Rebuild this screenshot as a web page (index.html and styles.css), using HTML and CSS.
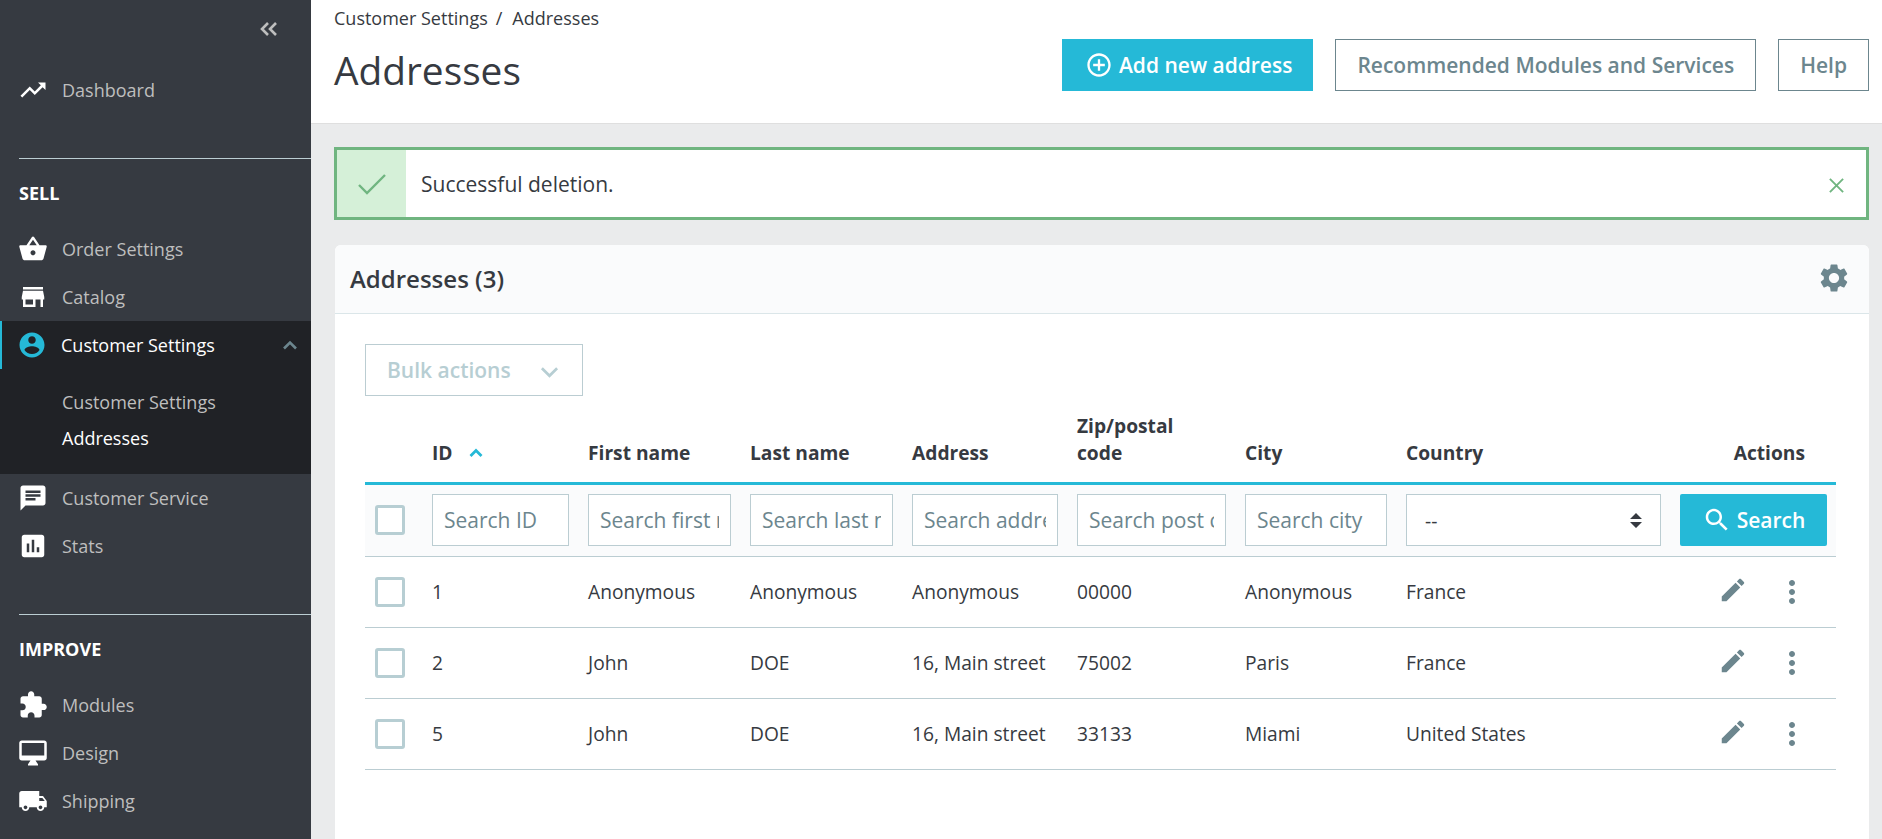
FILE: index.html
```html
<!DOCTYPE html>
<html lang="en">
<head>
    <meta charset="UTF-8">
    <meta name="viewport" content="width=device-width, initial-scale=1.0">
    <title>Addresses</title>
    <link rel="stylesheet" href="styles.css">
</head>
<body>
    <nav class="sidebar">
        <div class="nav-toggle">
            <svg class="toggle-icon" viewBox="0 0 20 14"><path d="M9 1 3 7l6 6M17 1l-6 6 6 6"/></svg>
        </div>
        <a class="nav-item">
            <svg class="nav-icon" viewBox="0 0 24 24"><path d="m16 6 2.29 2.29-4.88 4.88-4-4L2 16.59 3.41 18l6-6 4 4 6.3-6.29L22 12V6z"/></svg>
            Dashboard
        </a>

        <div class="nav-title">SELL</div>
        <a class="nav-item">
            <svg class="nav-icon" viewBox="0 0 24 24"><path d="M17.21 9l-4.38-6.56c-.19-.28-.51-.42-.83-.42-.32 0-.64.14-.83.43L6.79 9H2c-.55 0-1 .45-1 1 0 .09.01.18.04.27l2.54 9.27c.23.84 1 1.46 1.92 1.46h13c.92 0 1.69-.62 1.93-1.46l2.54-9.27L23 10c0-.55-.45-1-1-1h-4.79zM9 9l3-4.4L15 9H9zm3 8c-1.1 0-2-.9-2-2s.9-2 2-2 2 .9 2 2-.9 2-2 2z"/></svg>
            Order Settings
        </a>
        <a class="nav-item">
            <svg class="nav-icon" viewBox="0 0 24 24"><path d="M20 4H4v2h16V4zm1 10v-2l-1-5H4l-1 5v2h1v6h10v-6h4v6h2v-6h1zm-9 4H6v-4h6v4z"/></svg>
            Catalog
        </a>
        <div class="nav-group">
            <a class="nav-item nav-item-active">
                <svg class="nav-icon icon-blue" viewBox="0 0 24 24"><path d="M12 2C6.48 2 2 6.48 2 12s4.48 10 10 10 10-4.48 10-10S17.52 2 12 2zm0 3c1.66 0 3 1.34 3 3s-1.34 3-3 3-3-1.34-3-3 1.34-3 3-3zm0 14.2c-2.5 0-4.71-1.28-6-3.22.03-1.99 4-3.08 6-3.08 1.99 0 5.97 1.09 6 3.08-1.29 1.94-3.5 3.22-6 3.22z"/></svg>
                Customer Settings
                <svg class="nav-arrow" viewBox="0 0 16 10"><path d="M2 8.5 8 2.5l6 6"/></svg>
            </a>
            <div class="subnav">
                <a class="subnav-item">Customer Settings</a>
                <a class="subnav-item subnav-active">Addresses</a>
            </div>
        </div>
        <a class="nav-item">
            <svg class="nav-icon" viewBox="0 0 24 24"><path d="M20 2H4c-1.1 0-1.99.9-1.99 2L2 22l4-4h14c1.1 0 2-.9 2-2V4c0-1.1-.9-2-2-2zM6 9h12v2H6V9zm8 5H6v-2h8v2zm4-6H6V6h12v2z"/></svg>
            Customer Service
        </a>
        <a class="nav-item">
            <svg class="nav-icon" viewBox="0 0 24 24"><path d="M19 3H5c-1.1 0-2 .9-2 2v14c0 1.1.9 2 2 2h14c1.1 0 2-.9 2-2V5c0-1.1-.9-2-2-2zM9 17H7v-7h2v7zm4 0h-2V7h2v10zm4 0h-2v-4h2v4z"/></svg>
            Stats
        </a>

        <div class="nav-title">IMPROVE</div>
        <a class="nav-item">
            <svg class="nav-icon" viewBox="0 0 24 24"><path d="M20.5 11H19V7c0-1.1-.9-2-2-2h-4V3.5C13 2.12 11.88 1 10.5 1S8 2.12 8 3.5V5H4c-1.1 0-1.99.9-1.99 2v3.8H3.5c1.49 0 2.7 1.21 2.7 2.7s-1.21 2.7-2.7 2.7H2V20c0 1.1.9 2 2 2h3.8v-1.5c0-1.49 1.21-2.7 2.7-2.7 1.49 0 2.7 1.21 2.7 2.7V22H17c1.1 0 2-.9 2-2v-4h1.5c1.38 0 2.5-1.12 2.5-2.5S21.88 11 20.5 11z"/></svg>
            Modules
        </a>
        <a class="nav-item">
            <svg class="nav-icon" viewBox="0 0 24 24"><path d="M21 2H3c-1.1 0-2 .9-2 2v12c0 1.1.9 2 2 2h7l-2 3v1h8v-1l-2-3h7c1.1 0 2-.9 2-2V4c0-1.1-.9-2-2-2zm0 12H3V4h18v10z"/></svg>
            Design
        </a>
        <a class="nav-item">
            <svg class="nav-icon" viewBox="0 0 24 24"><path d="M20 8h-3V4H3c-1.1 0-2 .9-2 2v11h2c0 1.66 1.34 3 3 3s3-1.34 3-3h6c0 1.66 1.34 3 3 3s3-1.34 3-3h2v-5l-3-4zM6 18.5c-.83 0-1.5-.67-1.5-1.5s.67-1.5 1.5-1.5 1.5.67 1.5 1.5-.67 1.5-1.5 1.5zm13.5-9 1.96 2.5H17V9.5h2.5zm-1.5 9c-.83 0-1.5-.67-1.5-1.5s.67-1.5 1.5-1.5 1.5.67 1.5 1.5-.67 1.5-1.5 1.5z"/></svg>
            Shipping
        </a>
        <a class="nav-item">
            <svg class="nav-icon" viewBox="0 0 24 24"><path d="M20 4H4c-1.11 0-1.99.89-1.99 2L2 18c0 1.11.89 2 2 2h16c1.11 0 2-.89 2-2V6c0-1.11-.89-2-2-2zm0 14H4v-6h16v6zm0-10H4V6h16v2z"/></svg>
        </a>
    </nav>

    <div class="main">
        <header class="topbar">
            <div class="breadcrumb"><span>Customer Settings</span><span class="breadcrumb-sep">/</span><span>Addresses</span></div>
            <div class="topbar-row">
                <h1>Addresses</h1>
                <div class="toolbar">
                    <button class="btn btn-primary">
                        <svg class="btn-icon" viewBox="0 0 24 24"><path d="M13 7h-2v4H7v2h4v4h2v-4h4v-2h-4V7zm-1-5C6.48 2 2 6.48 2 12s4.48 10 10 10 10-4.48 10-10S17.52 2 12 2zm0 18c-4.41 0-8-3.59-8-8s3.59-8 8-8 8 3.59 8 8-3.59 8-8 8z"/></svg>
                        Add new address
                    </button>
                    <button class="btn btn-outline">Recommended Modules and Services</button>
                    <button class="btn btn-outline">Help</button>
                </div>
            </div>
        </header>

        <div class="content">
            <div class="alert">
                <div class="alert-icon">
                    <svg viewBox="0 0 30 24"><path d="M2 13l8 8L28 3"/></svg>
                </div>
                <div class="alert-text">Successful deletion.</div>
                <svg class="alert-close" viewBox="0 0 18 18"><path d="M2 2l14 14M16 2 2 16"/></svg>
            </div>

            <section class="card">
                <div class="card-header">
                    <h2>Addresses (3)</h2>
                    <svg class="card-gear" viewBox="0 0 24 24"><path d="M19.14 12.94c.04-.3.06-.61.06-.94 0-.32-.02-.64-.07-.94l2.03-1.58c.18-.14.23-.41.12-.61l-1.92-3.32c-.12-.22-.37-.29-.59-.22l-2.39.96c-.5-.38-1.03-.7-1.62-.94l-.36-2.54c-.04-.24-.24-.41-.48-.41h-3.84c-.24 0-.43.17-.47.41l-.36 2.54c-.59.24-1.13.57-1.62.94l-2.39-.96c-.22-.08-.47 0-.59.22L2.74 8.87c-.12.21-.08.47.12.61l2.03 1.58c-.05.3-.09.63-.09.94s.02.64.07.94l-2.03 1.58c-.18.14-.23.41-.12.61l1.92 3.32c.12.22.37.29.59.22l2.39-.96c.5.38 1.03.7 1.62.94l.36 2.54c.05.24.24.41.48.41h3.84c.24 0 .44-.17.47-.41l.36-2.54c.59-.24 1.13-.56 1.62-.94l2.39.96c.22.08.47 0 .59-.22l1.92-3.32c.12-.22.07-.47-.12-.61l-2.01-1.58zM12 15.6c-1.98 0-3.6-1.62-3.6-3.6s1.62-3.6 3.6-3.6 3.6 1.62 3.6 3.6-1.62 3.6-3.6 3.6z"/></svg>
                </div>
                <div class="card-body">
                    <button class="bulk-btn">
                        Bulk actions
                        <svg viewBox="0 0 20 12"><path d="M2 2l8 8 8-8"/></svg>
                    </button>

                    <table class="grid">
                        <colgroup>
                            <col class="col-check"><col class="col-id"><col class="col-first"><col class="col-last">
                            <col class="col-address"><col class="col-zip"><col class="col-city"><col class="col-country"><col class="col-actions">
                        </colgroup>
                        <thead>
                            <tr class="head-row">
                                <th></th>
                                <th>ID <svg class="sort-icon" viewBox="0 0 14 10"><path d="M1.5 8 7 2.5 12.5 8"/></svg></th>
                                <th>First name</th>
                                <th>Last name</th>
                                <th>Address</th>
                                <th class="th-zip">Zip/postal code</th>
                                <th>City</th>
                                <th>Country</th>
                                <th class="th-actions">Actions</th>
                            </tr>
                            <tr class="filter-row">
                                <td><input type="checkbox" class="check"></td>
                                <td><input class="filter-input" placeholder="Search ID"></td>
                                <td><input class="filter-input" placeholder="Search first name"></td>
                                <td><input class="filter-input" placeholder="Search last name"></td>
                                <td><input class="filter-input" placeholder="Search address"></td>
                                <td><input class="filter-input" placeholder="Search post code"></td>
                                <td><input class="filter-input" placeholder="Search city"></td>
                                <td>
                                    <div class="select-wrap">
                                        <select class="filter-select"><option>--</option></select>
                                        <svg class="select-arrows" viewBox="0 0 12 15"><path d="M6 0l6 6H0zM6 15 0 9h12z"/></svg>
                                    </div>
                                </td>
                                <td>
                                    <button class="search-btn">
                                        <svg viewBox="0 0 24 24"><path d="M15.5 14h-.79l-.28-.27C15.41 12.59 16 11.11 16 9.5 16 5.91 13.09 3 9.5 3S3 5.91 3 9.5 5.91 16 9.5 16c1.61 0 3.09-.59 4.23-1.57l.27.28v.79l5 4.99L20.49 19l-4.99-5zm-6 0C7.01 14 5 11.99 5 9.5S7.01 5 9.5 5 14 7.01 14 9.5 11.99 14 9.5 14z"/></svg>
                                        Search
                                    </button>
                                </td>
                            </tr>
                        </thead>
                        <tbody>
                            <tr>
                                <td><input type="checkbox" class="check"></td>
                                <td>1</td><td>Anonymous</td><td>Anonymous</td><td>Anonymous</td><td>00000</td><td>Anonymous</td><td>France</td>
                                <td>
                                    <div class="row-actions">
                                        <svg class="act-edit" viewBox="0 0 24 24"><path d="M3 17.25V21h3.75L17.81 9.94l-3.75-3.75L3 17.25zM20.71 7.04c.39-.39.39-1.02 0-1.41l-2.34-2.34c-.39-.39-1.02-.39-1.41 0l-1.83 1.83 3.75 3.75 1.83-1.83z"/></svg>
                                        <svg class="act-more" viewBox="0 0 24 24"><path d="M12 8c1.1 0 2-.9 2-2s-.9-2-2-2-2 .9-2 2 .9 2 2 2zm0 2c-1.1 0-2 .9-2 2s.9 2 2 2 2-.9 2-2-.9-2-2-2zm0 6c-1.1 0-2 .9-2 2s.9 2 2 2 2-.9 2-2-.9-2-2-2z"/></svg>
                                    </div>
                                </td>
                            </tr>
                            <tr>
                                <td><input type="checkbox" class="check"></td>
                                <td>2</td><td>John</td><td>DOE</td><td>16, Main street</td><td>75002</td><td>Paris</td><td>France</td>
                                <td>
                                    <div class="row-actions">
                                        <svg class="act-edit" viewBox="0 0 24 24"><path d="M3 17.25V21h3.75L17.81 9.94l-3.75-3.75L3 17.25zM20.71 7.04c.39-.39.39-1.02 0-1.41l-2.34-2.34c-.39-.39-1.02-.39-1.41 0l-1.83 1.83 3.75 3.75 1.83-1.83z"/></svg>
                                        <svg class="act-more" viewBox="0 0 24 24"><path d="M12 8c1.1 0 2-.9 2-2s-.9-2-2-2-2 .9-2 2 .9 2 2 2zm0 2c-1.1 0-2 .9-2 2s.9 2 2 2 2-.9 2-2-.9-2-2-2zm0 6c-1.1 0-2 .9-2 2s.9 2 2 2 2-.9 2-2-.9-2-2-2z"/></svg>
                                    </div>
                                </td>
                            </tr>
                            <tr>
                                <td><input type="checkbox" class="check"></td>
                                <td>5</td><td>John</td><td>DOE</td><td>16, Main street</td><td>33133</td><td>Miami</td><td>United States</td>
                                <td>
                                    <div class="row-actions">
                                        <svg class="act-edit" viewBox="0 0 24 24"><path d="M3 17.25V21h3.75L17.81 9.94l-3.75-3.75L3 17.25zM20.71 7.04c.39-.39.39-1.02 0-1.41l-2.34-2.34c-.39-.39-1.02-.39-1.41 0l-1.83 1.83 3.75 3.75 1.83-1.83z"/></svg>
                                        <svg class="act-more" viewBox="0 0 24 24"><path d="M12 8c1.1 0 2-.9 2-2s-.9-2-2-2-2 .9-2 2 .9 2 2 2zm0 2c-1.1 0-2 .9-2 2s.9 2 2 2 2-.9 2-2-.9-2-2-2zm0 6c-1.1 0-2 .9-2 2s.9 2 2 2 2-.9 2-2-.9-2-2-2z"/></svg>
                                    </div>
                                </td>
                            </tr>
                        </tbody>
                    </table>
                </div>
            </section>
        </div>
    </div>
</body>
</html>
```

FILE: styles.css
```css
* {
    box-sizing: border-box;
}
body {
    margin: 0;
    height: 100vh;
    overflow: hidden;
    display: flex;
    font-family: "Open Sans", sans-serif;
    font-size: 18px;
    color: #363a41;
    background-color: #eaebec;
}

/* sidebar */
.sidebar {
    width: 311px;
    flex-shrink: 0;
    height: 100vh;
    overflow: hidden;
    background-color: #363a41;
}
.nav-toggle {
    height: 66px;
    padding: 22px 32px 0 0;
    display: flex;
    justify-content: flex-end;
}
.toggle-icon {
    width: 20px;
    height: 14px;
    fill: none;
    stroke: #bebebe;
    stroke-width: 2.6;
}
.nav-item {
    height: 48px;
    display: flex;
    align-items: center;
    gap: 14px;
    padding-left: 18px;
    color: #bebebe;
}
.nav-icon {
    width: 30px;
    height: 30px;
    flex-shrink: 0;
    fill: #fff;
}
.icon-blue {
    fill: #25b9d7;
}
.nav-title {
    margin: 44px 0 0 19px;
    padding: 22px 0 20px;
    border-top: 1px solid #bbcdd2;
    line-height: 24px;
    font-size: 18px;
    font-weight: 700;
    color: #fff;
}
.nav-group {
    background-color: #202226;
}
.nav-item-active {
    gap: 14px;
    padding-left: 15px;
    color: #fff;
    border-left: 2px solid #25b9d7;
}
.nav-arrow {
    width: 16px;
    height: 10px;
    margin-left: auto;
    margin-right: 13px;
    fill: none;
    stroke: #6c868e;
    stroke-width: 2.6;
}
.subnav {
    padding: 15px 0 18px 62px;
}
.subnav-item {
    display: block;
    height: 36px;
    line-height: 36px;
    color: #bebebe;
}
.subnav-active {
    color: #fff;
}

/* top bar */
.main {
    flex: 1;
    min-width: 0;
    display: flex;
    flex-direction: column;
}
.topbar {
    height: 124px;
    flex-shrink: 0;
    padding: 7px 13px 0 23px;
    background-color: #fff;
    border-bottom: 1px solid #dfdfdf;
}
.breadcrumb {
    line-height: 23px;
    display: flex;
    gap: 8px;
}
.breadcrumb-sep {
    margin-right: 2px;
}
.topbar-row {
    display: flex;
    justify-content: space-between;
    align-items: flex-start;
}
h1 {
    margin: 8px 0 0;
    font-size: 38.8px;
    line-height: 64px;
    font-weight: 400;
}
.toolbar {
    display: flex;
    gap: 22px;
    margin-top: 9px;
}
.btn {
    height: 52px;
    padding: 0 21px;
    display: flex;
    align-items: center;
    font-family: "Open Sans", sans-serif;
    font-size: 21px;
    font-weight: 600;
    border: 1px solid #6c868e;
    background-color: #fff;
    color: #6c868e;
    border-radius: 0;
}
.btn-primary {
    gap: 6px;
    padding: 0 20px 0 22px;
    background-color: #25b9d7;
    border-color: #25b9d7;
    color: #fff;
}
.btn-icon {
    width: 28px;
    height: 28px;
    fill: #fff;
}

/* alert */
.content {
    flex: 1;
    display: flex;
    flex-direction: column;
    min-height: 0;
    padding: 23px 13px 0 23px;
}
.alert {
    height: 73px;
    flex-shrink: 0;
    display: flex;
    align-items: center;
    border: 3px solid #70b580;
    background-color: #fff;
}
.alert-icon {
    width: 69px;
    height: 100%;
    display: flex;
    align-items: center;
    justify-content: center;
    background-color: #d5f0d8;
}
.alert-icon svg {
    width: 30px;
    height: 24px;
    fill: none;
    stroke: #70b580;
    stroke-width: 2.4;
}
.alert-text {
    flex: 1;
    padding-left: 15px;
    font-size: 21px;
}
.alert-close {
    width: 17px;
    height: 17px;
    margin-right: 21px;
    margin-top: 3px;
    fill: none;
    stroke: #70b580;
    stroke-width: 2;
}

/* card */
.card {
    flex: 1;
    margin-top: 25px;
    margin-left: 1px;
    background-color: #fff;
    border-radius: 6px 6px 0 0;
}
.card-header {
    height: 69px;
    display: flex;
    align-items: center;
    justify-content: space-between;
    padding: 0 18px 2px 15px;
    background-color: #fafbfc;
    border-bottom: 1px solid #dbe6e9;
    border-radius: 6px 6px 0 0;
}
h2 {
    margin: 0;
    font-size: 24px;
    font-weight: 600;
}
.card-gear {
    width: 34px;
    height: 34px;
    fill: #6c868e;
}
.card-body {
    padding: 30px 32px 0 30px;
}
.bulk-btn {
    width: 218px;
    height: 52px;
    padding: 0 23px 0 21px;
    display: flex;
    align-items: center;
    justify-content: space-between;
    font-family: "Open Sans", sans-serif;
    font-size: 21px;
    font-weight: 600;
    color: #b7ced3;
    background-color: #fff;
    border: 1px solid #bbcdd2;
}
.bulk-btn svg {
    width: 19px;
    height: 12px;
    margin-top: 3px;
    fill: none;
    stroke: #b7ced3;
    stroke-width: 2.8;
}

/* table */
.grid {
    width: 1471px;
    table-layout: fixed;
    border-collapse: collapse;
    margin-top: 15px;
    font-size: 19.2px;
}
.col-check { width: 57px; }
.col-id { width: 156px; }
.col-first, .col-last { width: 162px; }
.col-address { width: 165px; }
.col-zip { width: 168px; }
.col-city { width: 161px; }
.col-country { width: 274px; }
.col-actions { width: 166px; }

.grid th, .grid td {
    padding: 0 9px 0 10px;
    text-align: left;
}
.grid th {
    font-weight: 700;
    line-height: 27px;
    padding-bottom: 16px;
    vertical-align: bottom;
}
.head-row {
    height: 72px;
    border-bottom: 3px solid #25b9d7;
}
.grid .th-zip {
    padding-right: 40px;
}
.grid .th-actions {
    text-align: right;
    padding-right: 31px;
}
.sort-icon {
    width: 14px;
    height: 10px;
    margin: 0 0 2px 11px;
    fill: none;
    stroke: #25b9d7;
    stroke-width: 2.8;
}
.filter-row {
    height: 73px;
    background-color: #fafbfc;
    border-bottom: 1px solid #bbcdd2;
}
tbody tr {
    height: 71px;
    border-bottom: 1px solid #bbcdd2;
}
.grid td:first-child {
    padding-right: 0;
}
.check {
    appearance: none;
    display: block;
    width: 30px;
    height: 30px;
    margin: 0;
    background-color: #fff;
    border: 3px solid #b7ced3;
    border-radius: 3px;
}
.filter-input, .filter-select {
    display: block;
    width: 100%;
    height: 52px;
    padding: 0 11px;
    font-family: "Open Sans", sans-serif;
    font-size: 21px;
    color: #363a41;
    background-color: #fff;
    border: 1px solid #bbcdd2;
    border-radius: 0;
}
.filter-input::placeholder {
    color: #6c868e;
    opacity: 1;
}
.select-wrap {
    position: relative;
}
.filter-select {
    appearance: none;
    padding: 0 18px;
    font-size: 19.2px;
}
.select-arrows {
    position: absolute;
    right: 19px;
    top: 19px;
    width: 12px;
    height: 15px;
    fill: #363a41;
}
.search-btn {
    width: 147px;
    height: 52px;
    display: flex;
    align-items: center;
    justify-content: center;
    gap: 5px;
    font-family: "Open Sans", sans-serif;
    font-size: 21px;
    font-weight: 600;
    color: #fff;
    background-color: #25b9d7;
    border: none;
    border-radius: 2px;
}
.search-btn svg {
    width: 30px;
    height: 30px;
    fill: #fff;
}
.row-actions {
    display: flex;
    justify-content: flex-end;
    align-items: center;
    gap: 26px;
    padding-right: 17px;
}
.act-edit {
    width: 30px;
    height: 30px;
    margin-top: -4px;
    fill: #6c868e;
}
.act-more {
    width: 36px;
    height: 36px;
    fill: #6c868e;
}
```
